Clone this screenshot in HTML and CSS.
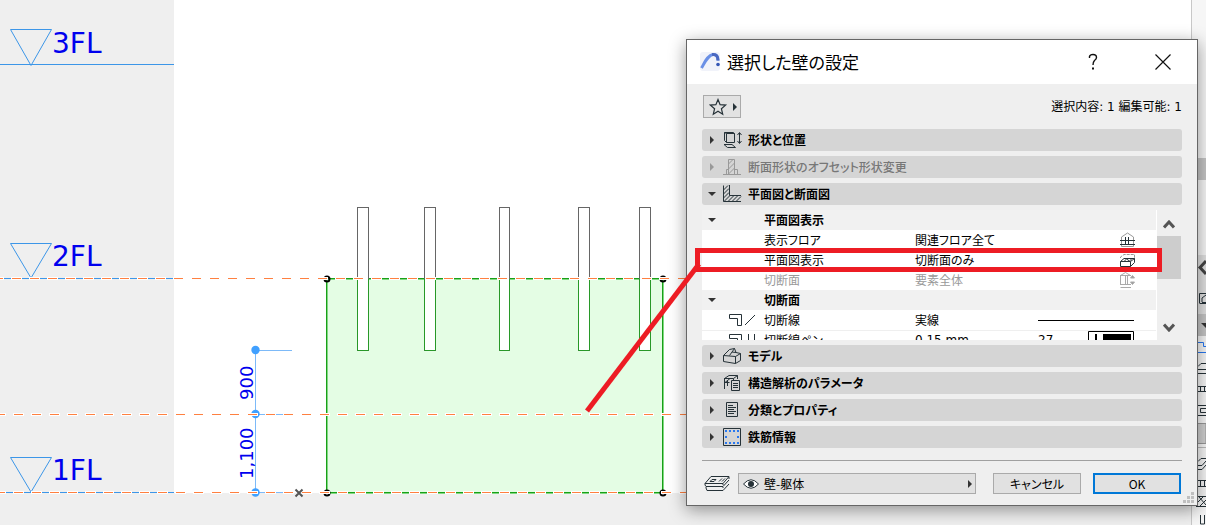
FILE: index.html
```html
<!DOCTYPE html>
<html lang="ja">
<head>
<meta charset="utf-8">
<title>選択した壁の設定</title>
<link rel="stylesheet" href="styles.css">
</head>
<body>
<div class="app">
  <main class="workspace">
    <svg class="drawing">
      <rect class="outside" x="0" y="0" width="174" height="100%"/>
      <rect class="outside" x="0" y="493" width="100%" height="100%"/>
      <g class="level">
        <path d="M0 64.5H174M10.500 29.500H51.500L31 65.500ZM0 278.500H174M10.500 243.500H51.500L31 278ZM0 492.500H174M10.500 457.500H51.500L31 492Z"/>
      </g>
      <text class="level-name" x="52" y="53">3FL</text>
      <text class="level-name" x="52" y="266">2FL</text>
      <text class="level-name" x="52" y="480">1FL</text>

      <rect class="wall" x="326" y="278" width="338" height="215"/>
      <path class="wall-light" d="M327.500 279V492M663.500 279V492M327 279.500H663M327 493.500H663"/>
      <path class="wall-edge" d="M326.500 278V493M662.500 278V493M326 278.500H663M326 492.500H663"/>
      <g class="post">
        <rect x="357.500" y="207.500" width="11" height="143"/><rect x="424.500" y="207.500" width="11" height="143"/><rect x="499.500" y="207.500" width="10" height="143"/><rect x="578.500" y="207.500" width="11" height="143"/><rect x="639.500" y="207.500" width="11" height="143"/>
      </g>
      <path class="post-cut" d="M357.500 279V350.500H368.500V279M424.500 279V350.500H435.500V279M499.500 279V350.500H509.500V279M578.500 279V350.500H589.500V279M639.500 279V350.500H650.500V279"/>

      <g class="dimension">
        <path d="M255.500 350V493M256 350.500H292M256 414.500H283M256 492.500H283"/>
        <circle cx="255.500" cy="350" r="4.200"/><circle cx="255.500" cy="414" r="4.200"/><circle cx="255.500" cy="492.500" r="4.200"/>
      </g>
      <text class="dimension-value" transform="translate(253 400) rotate(-90)">900</text>
      <text class="dimension-value" transform="translate(253 479) rotate(-90)">1,100</text>

      <g class="node"><circle cx="327" cy="279" r="2.500"/><circle cx="663" cy="279" r="2.500"/><circle cx="327" cy="493" r="2.500"/><circle cx="663" cy="493" r="2.500"/></g>
      <g class="halo"><line x1="-7" x2="100%" y1="278.500" y2="278.500"/><line x1="-5" x2="100%" y1="414.500" y2="414.500"/><line x1="-5" x2="100%" y1="492.500" y2="492.500"/></g>
      <g class="guide"><line x1="-6" x2="100%" y1="278.500" y2="278.500"/><line x1="-4" x2="100%" y1="414.500" y2="414.500"/><line x1="-4" x2="100%" y1="492.500" y2="492.500"/></g>
      <path class="origin" d="M295.500 489.500L302.500 496.500M302.500 489.500L295.500 496.500"/>
    </svg>
  </main>
  <aside class="palette">
    <svg class="palette-icons" width="15" height="525" fill="none" stroke="#263238">
      <path d="M.5 0V525" stroke="#c8c8c8"/>
      <path d="M1 158H15V180H1ZM1 314H15V336H1Z" fill="#c4c4c4" stroke="none"/>
      <path d="M1 255H15V314H1Z" fill="#e0e0e0" stroke="none"/>
      <path d="M15 261L9 267.500L15 274" stroke="#444" stroke-width="3"/>
      <path d="M8.500 303V293.500H15M11 302V298L15 295M11 302.500H15M8.500 303.500H15"/>
      <path d="M10 323H15V328Z" fill="#333" stroke="none"/>
      <path d="M7 342.500H12.500V346.500H15M7 352.500H15" stroke="#2878f0"/>
      <path d="M7 366.500L10 363.500H15M7 369.500H15M7 373.500H15M7 386.500H15M9.500 387V392M13.500 387V392M7 391.500H15M7 405.500H15M15 408.500H9.500V412.500H15M7 415.500H15M7 461.500L10 458.500H15M7 465.500H11L15 461M7 469.500H11L15 465M7 480.500H15M9.500 481V487M13.500 481V487M7 486.500H15M7 496.500H15M5 506.500H15M7 502L12 497M9 506L15 500M8 497L15 505M9.500 515V524H13.500V515"/>
      <path d="M7 423.500H15V443.500H7" fill="#d0d0d0" stroke="#999"/>
      <path d="M7 447.500H15" stroke="#bbb"/>
    </svg>
  </aside>

  <section class="dialog" role="dialog" aria-labelledby="dialog-title">
    <header class="titlebar">
      <svg class="app-logo" width="20" height="20" viewBox="0 0 20 20"><rect width="20" height="19" rx="3" fill="#f1f3fa"/><path d="M1.500 16C5 10 8 3 13 2.500C16.500 2 18 4.500 18 8.500" fill="none" stroke="#6a90e6" stroke-width="3"/><path d="M12 2.600C16.500 2 18 4.500 18 8.500" fill="none" stroke="#4a68c0" stroke-width="3"/><circle cx="18" cy="12.500" r="1.800" fill="#3557b5"/></svg>
      <h1 class="title" id="dialog-title">選択した壁の設定</h1>
      <button class="title-button" aria-label="ヘルプ"><svg width="16" height="18" fill="none" stroke="#111" stroke-width="1.400"><path d="M4.500 5V3.500Q5 1.500 8 1.500Q11.500 1.500 11.500 4.500Q11.500 6 9.500 7.500Q8 9 8 12"/><path d="M8 14.500V16.500" stroke-width="2"/></svg></button>
      <button class="title-button" aria-label="閉じる"><svg width="16" height="16" stroke="#111" stroke-width="1.200"><path d="M.5 .5L15.500 15.500M15.500 .5L.5 15.500"/></svg></button>
    </header>

    <div class="body">
      <div class="toolbar">
        <button class="favorite" aria-label="お気に入り"><svg width="28" height="18" fill="none" stroke="#263238" stroke-width="1.200"><path d="M9 1.500L11.100 6.700L16.600 7.100L12.400 10.700L13.700 16.200L9 13.200L4.300 16.200L5.600 10.700L1.400 7.100L6.900 6.700Z"/><path d="M24 5V13L28 9Z" fill="#263238" stroke="none"/></svg></button>
        <p class="selection">選択内容: 1 編集可能: 1</p>
      </div>

      <button class="panel-head"><svg class="arrow" viewBox="0 0 8 8"><path d="M2 0V8L6 4Z"/></svg><svg class="icon" viewBox="0 0 18 18"><path d="M3.500 2.500H11.500V11.500H3.500ZM3.500 11.500L1.500 9.500V1.500H10.500L11.500 2.500M1.500 1.500L3.500 2.500M1 13.500H9L12.500 16.500H4.500ZM16.500 2V12M14.500 4L16.500 1.500L18.500 4M14.500 10L16.500 12.500L18.500 10"/></svg>形状と位置</button>
      <button class="panel-head" disabled><svg class="arrow" viewBox="0 0 8 8"><path d="M2 0V8L6 4Z"/></svg><svg class="icon" viewBox="0 0 18 18"><path d="M0 16.500H18M3.500 16V11.500H5.500V1.500H11.500V11.500H14.500V16M5.500 11V16M11.500 11V16M5.500 6L10 1.500M5.500 11L11.500 5M5.500 16L11.500 10"/></svg>断面形状のオフセット形状変更</button>
      <button class="panel-head" aria-expanded="true"><svg class="arrow" viewBox="0 0 8 8"><path d="M0 2H8L4 6Z"/></svg><svg class="icon" viewBox="0 0 18 18"><path d="M.5 .5V16.500H18M6.500 0V10.500H18M.5 5L5 .5M.5 9L6 3.500M.5 13L6 7.500M1 16.500L7 10.500M5 16.500L11 10.500M9 16.500L15 10.500M13 16.500L18 11.500"/></svg>平面図と断面図</button>

      <div class="settings">
        <div class="viewport">
          <table class="grid">
            <colgroup><col class="col-mark"><col class="col-name"><col class="col-value"><col class="col-extra"></colgroup>
            <tbody>
            <tr class="group"><td><svg class="arrow" viewBox="0 0 8 8"><path d="M0 2H8L4 6Z"/></svg></td><th colspan="3">平面図表示</th></tr>
            <tr><td></td><td>表示フロア</td><td>関連フロア全て</td><td class="tool"><svg class="small-icon" viewBox="0 0 16 16"><path d="M1.500 14.500V5L7.500 1L13.500 5V14.500Z" stroke="#999"/><path d="M0 8.500H15M0 12.500H15M5.500 5V12M8.500 5V12"/></svg></td></tr>
            <tr><td></td><td>平面図表示</td><td>切断面のみ</td><td class="tool"><svg class="small-icon" viewBox="0 0 16 16"><path d="M.5 6V5L4 2.500H14.500V10" stroke="#999" stroke-dasharray="3 1"/><path d="M.5 9.500L4 6.500H14.500L10.500 9.500ZM.5 9.500V14.500H10.500V9.500M10.500 14.500L14.500 10.500V6.500M4 9.500L7 6.500L9 9.500L12 6.500"/></svg></td></tr>
            <tr class="muted"><td></td><td>切断面</td><td>要素全体</td><td class="tool"><svg class="small-icon" viewBox="0 0 16 16"><path d="M.5 13V3.500L5.500 .5L10.500 3.500M0 3.500H11M0 12.500H11M5.500 4V12M7.500 4V12M.5 15.500H11"/><path d="M10.500 6L12.500 3.500L14.500 6ZM10.500 10L12.500 12.500L14.500 10Z" fill="#999"/></svg></td></tr>
            <tr class="group"><td><svg class="arrow" viewBox="0 0 8 8"><path d="M0 2H8L4 6Z"/></svg></td><th colspan="3">切断面</th></tr>
            <tr><td><svg class="line-icon" viewBox="0 0 27 14"><path d="M.5 1.500H12.500V12.500H8.500V5.500H.5ZM16 12L26 2"/></svg></td><td>切断線</td><td>実線</td><td><svg class="line-sample" width="96" height="14"><path d="M0 7.500H96"/></svg></td></tr>
            <tr class="ruled"><td><svg class="line-icon" viewBox="0 0 27 14"><path d="M.5 1.500H12.500V12.500H8.500V5.500H.5ZM19.500 1V12M25.500 1V12"/></svg></td><td>切断線ペン</td><td class="latin">0.15 mm</td><td><span class="pen latin"><span>27</span><svg width="46" height="18"><path d="M.5 .5H45.500V17.500H.5Z" fill="#fff" stroke="#000"/><path d="M7 3H9V15H7ZM15 3H43V15H15Z"/></svg></span></td></tr>
            </tbody>
          </table>
        </div>
        <div class="scrollbar">
          <svg width="12" height="9"><path d="M1 7.500L6 2L11 7.500"/></svg>
          <div class="thumb"></div>
          <svg width="12" height="9"><path d="M1 1.500L6 7L11 1.500"/></svg>
        </div>
      </div>

      <button class="panel-head"><svg class="arrow" viewBox="0 0 8 8"><path d="M2 0V8L6 4Z"/></svg><svg class="icon" viewBox="0 0 18 18"><path d="M.5 8.500L6.500 2.500L11.500 1.500L13 5.500L17.500 6.500V13.500L12.500 16.500L.5 14.500ZM.5 8.500L12.500 9.500V16.500M12.500 9.500L17.500 6.500M6.500 8.500L9 5L13 5.500M9 5L11.500 1.500"/></svg>モデル</button>
      <button class="panel-head"><svg class="arrow" viewBox="0 0 8 8"><path d="M2 0V8L6 4Z"/></svg><svg class="icon" viewBox="0 0 18 18"><path d="M1.500 4.500L6 1.500H14.500L10.500 4.500ZM1.500 4V15M1.500 8.500H6.500M4.500 7V12M10.500 4.500V7M14.500 1.500V5M2 8.500L7 4.500M8.500 6.500H16.500V16.500H8.500ZM10 9.500H15M10 11.500H15M10 13.500H15"/></svg>構造解析のパラメータ</button>
      <button class="panel-head"><svg class="arrow" viewBox="0 0 8 8"><path d="M2 0V8L6 4Z"/></svg><svg class="icon" viewBox="0 0 18 18"><path d="M3.500 1.500H14.500V15.500H3.500ZM5 4.500H10M5 6.500H13M5 8.500H11M5 10.500H13M5 12.500H11"/></svg>分類とプロパティ</button>
      <button class="panel-head"><svg class="arrow" viewBox="0 0 8 8"><path d="M2 0V8L6 4Z"/></svg><svg class="icon" viewBox="0 0 18 18"><path d="M.5 .5H17.500V17.500H.5Z"/><path d="M2 3H16M2 15H16" stroke="#2878f0" stroke-width="2" stroke-dasharray="2 2"/><path d="M2 9H4M14 9H16" stroke="#2878f0" stroke-width="2"/></svg>鉄筋情報</button>

      <footer class="footer">
        <svg class="layers" width="26" height="17" fill="none" stroke="#263238"><path d="M1 8.500L7 1.500H25L19 8.500ZM1 8.500V10L2 11.500H19L25 5M2 12V13L3 15.500H19L25 9M19 8.500V10M19 12V13M25 2V4M6 6.500L8 4.500H12L10 6.500ZM15 6.500L18 3.500M18 6.500L21 3.500"/></svg>
        <div class="layer-field">
          <svg class="eye" width="16" height="10"><path d="M.5 5Q8-3.500 15.500 5Q8 13.500 .5 5Z" fill="#fff" stroke="#263238"/><circle cx="8" cy="5" r="3" fill="#263238"/></svg>
          <select class="layer-select" aria-label="レイヤー"><option>壁-躯体</option></select>
          <svg class="arrow" viewBox="0 0 8 8"><path d="M2 0V8L6 4Z"/></svg>
        </div>
        <button class="action">キャンセル</button>
        <button class="action primary">OK</button>
      </footer>
    </div>
    <svg class="grip" width="12" height="12"><path d="M8 0H11V3H8ZM4 4H7V7H4ZM8 4H11V7H8ZM0 8H3V11H0ZM4 8H7V11H4ZM8 8H11V11H8Z"/></svg>
  </section>

  <svg class="markup"><rect x="697.500" y="250.500" width="462" height="19"/><path d="M587 411L699 264"/></svg>
</div>
</body>
</html>
```
FILE: styles.css
```css
* { box-sizing: border-box; }

body {
  margin: 0;
  overflow: hidden;
  background: #fff;
  color: #000;
  font: 12px/20px "Noto Sans CJK JP", sans-serif;
  font-feature-settings: "palt";
}

button, select { font: inherit; font-feature-settings: inherit; color: inherit; }
svg { display: block; flex: none; }

.app { position: relative; display: flex; min-height: 100vh; }
.workspace { flex: 1; min-width: 0; }
.drawing { width: 100%; height: 100%; }
.palette { width: 15px; background: #f6f6f6; overflow: hidden; }

.outside { fill: #efefef; }
.level path { fill: none; stroke: #3c96e8; }
.level-name { font: 28px "DejaVu Sans", sans-serif; fill: #00e; }
.wall { fill: #e4fde4; }
.wall-edge { fill: none; stroke: #18a018; }
.wall-light { fill: none; stroke: #82d882; }
.post rect { fill: #fff; stroke: #666; }
.post-cut { fill: none; stroke: #289828; }
.dimension path { fill: none; stroke: #7dbaf8; }
.dimension circle { fill: #40a0ff; }
.dimension-value { font: 18px "DejaVu Sans", sans-serif; fill: #00e; }
.halo line { stroke: #fff; stroke-width: 3; stroke-dasharray: 11 7; }
.guide line { stroke: #ff8040; stroke-dasharray: 9 9; }
.node circle { fill: none; stroke: #000; stroke-width: 2; }
.origin { stroke: #555; stroke-width: 2; }

.dialog {
  position: absolute;
  left: 686px;
  top: 39px;
  width: 512px;
  border: 1px solid #666;
  background: #efefef;
  box-shadow: 0 4px 16px rgba(0, 0, 0, .4);
}

.titlebar {
  display: flex;
  align-items: center;
  height: 44px;
  padding: 0 11px 0 13px;
  background: #fff;
}
.title { flex: 1; margin: 0 0 0 7px; font-size: 17px; font-weight: 400; line-height: 24px; }
.title-button {
  display: flex;
  align-items: center;
  justify-content: center;
  width: 46px;
  height: 32px;
  margin-left: 24px;
  padding: 0;
  border: 0;
  background: none;
}

.body { padding: 11px 15px; }
.toolbar { display: flex; align-items: center; justify-content: space-between; margin-bottom: 11px; padding-left: 1px; }
.favorite { width: 38px; height: 23px; padding: 1px 5px; border: 1px solid #aaa; background: #e2e2e2; }
.selection { margin: 0; font-family: "DejaVu Sans", "Noto Sans CJK JP", sans-serif; }
.latin { font-family: "DejaVu Sans", "Noto Sans CJK JP", sans-serif; }

.panel-head {
  display: flex;
  align-items: center;
  width: 100%;
  height: 22px;
  margin-bottom: 5px;
  padding: 0 6px;
  border: 0;
  border-radius: 3px;
  background: #d5d5d5;
  font-weight: 700;
}
.panel-head:disabled { color: #777; font-weight: 500; }
.arrow { width: 8px; height: 8px; fill: #333; }
.icon { width: 18px; height: 18px; margin: 0 7px; overflow: visible; fill: none; stroke: #263238; }
.panel-head:disabled .icon { stroke: #999; }
.panel-head:disabled .arrow { fill: #999; }

.settings { display: flex; height: 130px; margin-bottom: 5px; }
.viewport { flex: 1; overflow: hidden; border-right: 1px solid #fff; background: #fff; }
.grid { width: 100%; table-layout: fixed; border-collapse: collapse; }
.col-mark { width: 62px; }
.col-name { width: 151px; }
.col-value { width: 123px; }
.grid tr { height: 20px; }
.grid td, .grid th { height: 20px; padding: 0 0 1px; text-align: left; line-height: 18px; white-space: nowrap; }
.grid th { font-weight: 700; }
.group { background: #f1f1f1; }
.ruled { box-shadow: inset 0 1px #efefef; }
.grid .arrow { margin-left: 6px; }
.muted { color: #999; }
.small-icon { width: 16px; height: 16px; margin-left: 82px; fill: none; stroke: #263238; }
.muted .small-icon { stroke: #aaa; }
.line-icon { width: 27px; height: 14px; margin-left: 27px; fill: none; stroke: #263238; }
.line-sample { stroke: #000; }
.pen { display: flex; justify-content: space-between; width: 96px; }

.scrollbar { display: flex; flex-direction: column; align-items: center; width: 25px; padding: 10px 1px 8px 0; }
.scrollbar svg { fill: none; stroke: #555; stroke-width: 3; }
.thumb { width: 100%; height: 43px; margin: 7px 0 auto; background: #cdcdcd; }

.footer {
  display: flex;
  align-items: center;
  margin-top: 12px;
  padding: 12px 1px 0 2px;
  border-top: 1px solid #a0a0a0;
}
.layers { margin-right: 8px; }
.layer-field {
  display: flex;
  align-items: center;
  flex: 1;
  height: 21px;
  margin-right: 5px;
  padding: 0 1px 0 4px;
  border: 1px solid #aaa;
  background: #e1e1e1;
}
.layer-select { flex: 1; appearance: none; height: 19px; padding: 0 5px; border: 0; background: none; line-height: 18px; }
.action { width: 88px; height: 21px; margin-left: 12px; padding: 0; border: 1px solid #aaa; background: #e1e1e1; line-height: 18px; }
.primary { border: 2px solid #0078d7; }
.grip { position: absolute; right: 2px; bottom: 1px; fill: #bfbfbf; }

.markup { position: absolute; left: 0; top: 0; width: 100%; height: 100%; pointer-events: none; fill: none; stroke: #ed1c24; stroke-width: 5; }
```
